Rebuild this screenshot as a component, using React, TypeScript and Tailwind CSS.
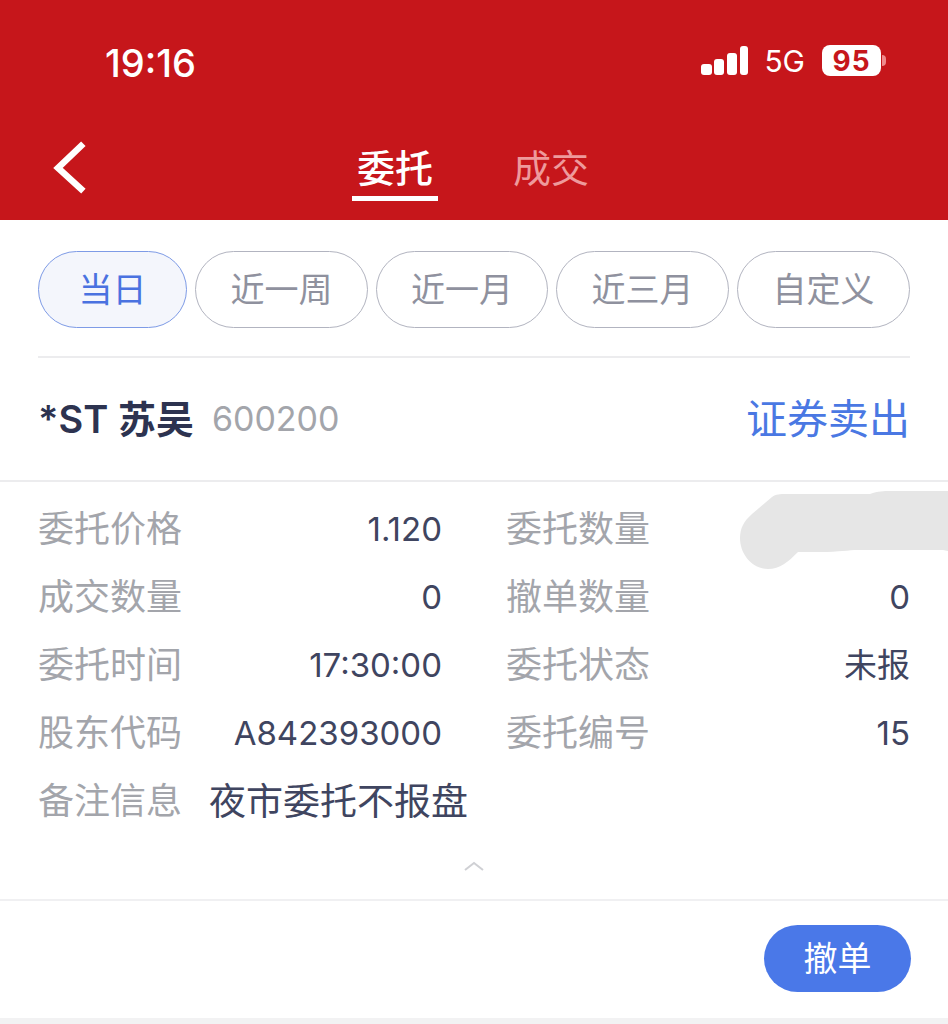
const font = { fontFamily: '"Inter","Noto Sans CJK SC",sans-serif' };

const pills = [
  { t: "当日", w: "w-[149px]", active: true },
  { t: "近一周", w: "w-[173px]" },
  { t: "近一月", w: "w-[172px]" },
  { t: "近三月", w: "w-[173px]" },
  { t: "自定义", w: "w-[173px]" },
];

function Cell({ label, value }: { label: string; value?: string }) {
  return (
    <div className="flex h-[68px] w-[404px] items-center justify-between">
      <span className="text-[36px] leading-none text-[#a3a5ab]">{label}</span>
      {value && <span className="text-[33px] leading-none text-[#3f4560]">{value}</span>}
    </div>
  );
}

export default function App() {
  return (
    <div style={font} className="relative flex h-[1024px] w-[948px] flex-col overflow-hidden bg-white">
      <header className="flex h-[220px] shrink-0 flex-col bg-[#c6161b] text-white">
        <div className="flex h-[124px] items-start justify-between pl-[105px] pr-[62px] pt-[40px]">
          <span className="text-[38px] font-medium leading-[46px]">19:16</span>
          <div className="flex items-center pt-[5px]">
            <svg width="48" height="30" viewBox="0 0 48 30" fill="white">
              <rect x="0" y="18" width="11" height="11" rx="3" />
              <rect x="13" y="13" width="10" height="16" rx="3" />
              <rect x="26" y="7" width="10" height="22" rx="3" />
              <rect x="39" y="0" width="8" height="29" rx="3" />
            </svg>
            <span className="ml-[15px] text-[30px] leading-none">5G</span>
            <div className="ml-[17px] flex h-[31px] w-[59px] items-center justify-center rounded-[8px] bg-white text-[28px] font-bold leading-none tracking-[1px] text-[#c6161b]">
              95
            </div>
            <span className="ml-[1px] h-[11px] w-[4px] rounded-r-full bg-[#ef8a8d]" />
          </div>
        </div>
        <div className="relative flex flex-1 items-start">
          <svg className="ml-[50px] mt-[14px]" width="40" height="60" viewBox="0 0 40 60" fill="none" stroke="white" strokeWidth="6.5" strokeLinecap="square">
            <path d="M31 8 L8 30 L31 51" />
          </svg>
          <div className="ml-[262px] flex flex-col items-center">
            <span className="text-[38px] font-medium leading-none mt-[25px]">委托</span>
            <span className="mt-[9px] h-[5px] w-[86px] bg-white" />
          </div>
          <span className="ml-[75px] mt-[25px] text-[38px] leading-none text-[#ee9a9c]">成交</span>
        </div>
      </header>

      <div className="mx-[38px] flex h-[138px] shrink-0 items-start justify-between border-b-2 border-[#ececee] pt-[31px]">
        {pills.map((p) => (
          <div
            key={p.t}
            className={`flex h-[77px] items-center justify-center rounded-full border-[1.5px] text-[34px] leading-none ${p.w} ${
              p.active ? "border-[#7e9be6] bg-[#f4f6fc] text-[#4a72e0]" : "border-[#b2b4c0] bg-white text-[#8f919e]"
            }`}
          >
            {p.t}
          </div>
        ))}
      </div>

      <div className="flex h-[124px] shrink-0 items-center justify-between border-b-2 border-[#ececee] px-[38px]">
        <div className="flex items-center">
          <span className="text-[38px] font-semibold leading-none text-[#2d3350]">*ST 苏吴</span>
          <span className="ml-[18px] text-[34px] leading-none text-[#a3a5ab]">600200</span>
        </div>
        <span className="text-[41px] leading-none text-[#4a78e3]">证券卖出</span>
      </div>

      <div className="flex flex-wrap justify-between px-[38px] pt-[13px]">
        <Cell label="委托价格" value="1.120" />
        <Cell label="委托数量" />
        <Cell label="成交数量" value="0" />
        <Cell label="撤单数量" value="0" />
        <Cell label="委托时间" value="17:30:00" />
        <Cell label="委托状态" value="未报" />
        <Cell label="股东代码" value="A842393000" />
        <Cell label="委托编号" value="15" />
        <div className="flex h-[68px] w-full items-center">
          <span className="text-[36px] leading-none text-[#a3a5ab]">备注信息</span>
          <span className="ml-[27px] text-[37px] leading-none text-[#3f4560]">夜市委托不报盘</span>
        </div>
      </div>

      <div className="flex h-[66px] shrink-0 items-start justify-center border-b-2 border-[#f0f0f2] pt-[26px]">
        <svg width="20" height="10" viewBox="0 0 20 10" fill="none" stroke="#cfd0d4" strokeWidth="2">
          <path d="M1 9 L10 2 L19 9" />
        </svg>
      </div>

      <div className="flex flex-1 items-start justify-end pr-[37px] pt-[24px]">
        <button className="flex h-[67px] w-[147px] items-center justify-center rounded-full bg-[#4a78e8] text-[34px] leading-none text-white">
          撤单
        </button>
      </div>
      <div className="h-[6px] shrink-0 bg-[#f2f2f3]" />

      <svg className="absolute left-[740px] top-[490px]" width="208" height="80" viewBox="0 0 208 80" fill="#e6e6e6">
        <path d="M0 48 C0 38 4 31 12 24 L32 7 C36 4 40 4 46 4 L130 4 C138 1 144 1 150 1 L208 1 L208 61 L203 60 L118 60 C108 60 100 62 80 62 L58 62 C48 72 40 79 28 79 C12 79 0 64 0 48 Z" />
      </svg>
    </div>
  );
}
